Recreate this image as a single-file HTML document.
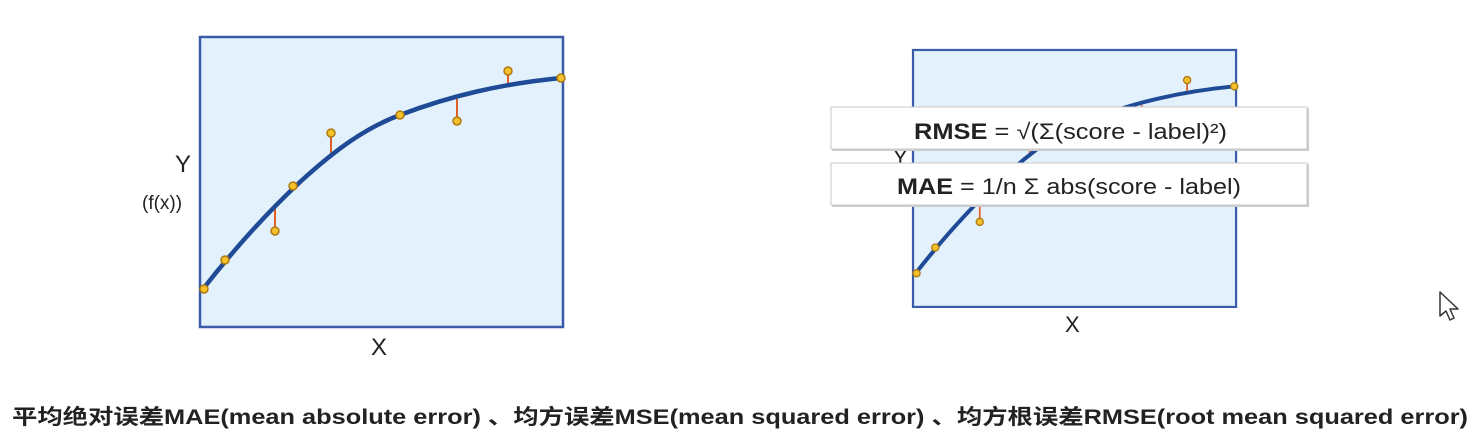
<!DOCTYPE html>
<html><head><meta charset="utf-8"><style>
html,body{margin:0;padding:0;background:#fff;width:1478px;height:439px;overflow:hidden}
svg{position:absolute;left:0;top:0}
</style></head><body>
<svg width="1478" height="439" viewBox="0 0 1478 439" xmlns="http://www.w3.org/2000/svg">
<defs>
<g id="chart">
<rect x="200" y="37" width="363" height="290" fill="#e3f1fc" stroke="#3a5ba8" stroke-width="2.5"/>
<g stroke="#e0602a" stroke-width="2">
<line x1="275" y1="231" x2="275" y2="207"/>
<line x1="331" y1="133" x2="331" y2="155"/>
<line x1="457" y1="121" x2="457" y2="99"/>
<line x1="508" y1="71" x2="508" y2="84"/>
</g>
<path d="M203,289 C235,248 270,210 300,182 C335,150 365,128 400,115 C450,96 500,84 561,78" fill="none" stroke="#1e4a96" stroke-width="4.5" stroke-linecap="round"/>
<g fill="#f3c12b" stroke="#b07a10" stroke-width="1.5">
<circle cx="204" cy="289" r="4"/><circle cx="225" cy="260" r="4"/><circle cx="293" cy="186" r="4"/>
<circle cx="400" cy="115" r="4"/><circle cx="561" cy="78" r="4"/>
<circle cx="275" cy="231" r="4"/><circle cx="331" cy="133" r="4"/><circle cx="457" cy="121" r="4"/><circle cx="508" cy="71" r="4"/>
</g>
</g>
</defs>
<use href="#chart"/>
<text x="175" y="172" font-family="Liberation Sans, sans-serif" font-size="24" fill="#222">Y</text>
<text x="142" y="209" font-family="Liberation Sans, sans-serif" font-size="19" fill="#222">(f(x))</text>
<text x="371" y="355" font-family="Liberation Sans, sans-serif" font-size="24" fill="#222">X</text>

<g transform="translate(735,17.2) scale(0.89,0.886)"><use href="#chart"/></g>
<text x="1065" y="332" font-family="Liberation Sans, sans-serif" font-size="22" fill="#222">X</text>
<text x="893" y="165" font-family="Liberation Sans, sans-serif" font-size="22" fill="#222">Y</text>

<rect x="832" y="108" width="477" height="43" fill="#ccc"/>
<rect x="832" y="164" width="477" height="43" fill="#ccc"/>
<rect x="831" y="107" width="476" height="42" fill="#fff" stroke="#c8c8c8" stroke-width="1"/>
<rect x="831" y="163" width="476" height="42" fill="#fff" stroke="#c8c8c8" stroke-width="1"/>
<text x="914" y="139" font-family="Liberation Sans, sans-serif" font-size="22" fill="#222" textLength="313" lengthAdjust="spacingAndGlyphs"><tspan font-weight="bold">RMSE</tspan> = √(Σ(score - label)²)</text>
<text x="897" y="194" font-family="Liberation Sans, sans-serif" font-size="22" fill="#222" textLength="344" lengthAdjust="spacingAndGlyphs"><tspan font-weight="bold">MAE</tspan> = 1/n Σ abs(score - label)</text>

<path d="M1440,292 L1440,316 L1446,311 L1450,320 L1454,318 L1450,309 L1458,309 Z" fill="#fff" stroke="#333" stroke-width="1.5" stroke-linejoin="round"/>

<text x="12" y="424" font-family="Liberation Sans, Noto Sans CJK SC, sans-serif" font-size="21" font-weight="bold" fill="#222" textLength="1456" lengthAdjust="spacingAndGlyphs">平均绝对误差MAE(mean absolute error) 、均方误差MSE(mean squared error) 、均方根误差RMSE(root mean squared error)</text>
</svg>
</body></html>
